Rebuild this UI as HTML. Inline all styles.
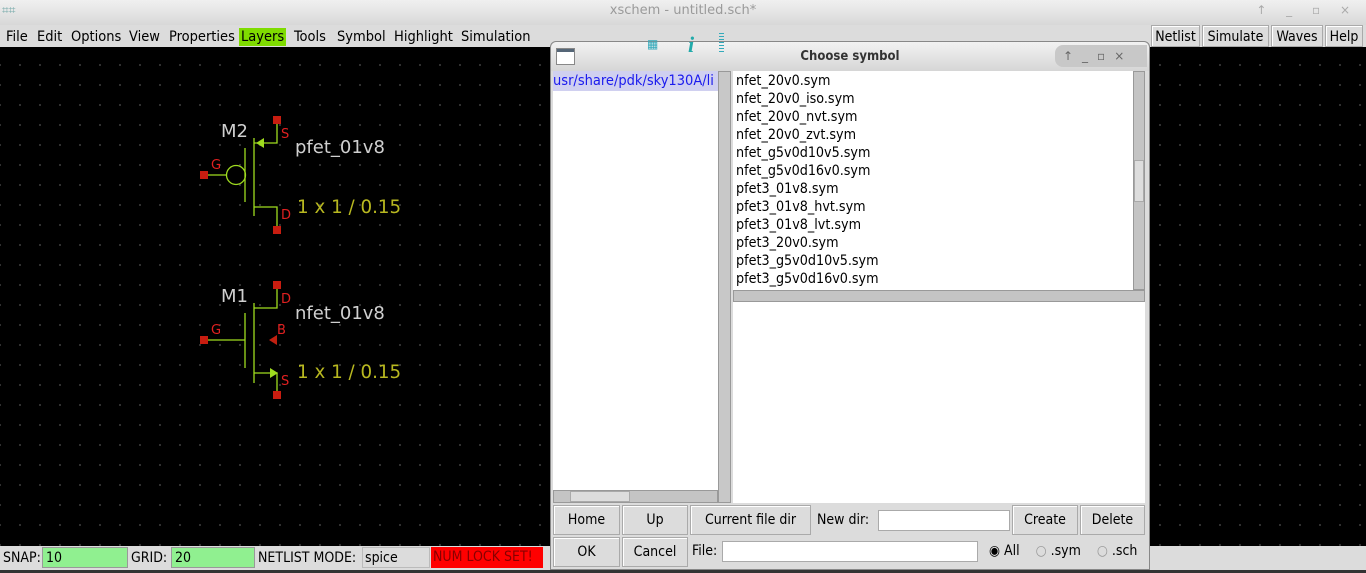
<!DOCTYPE html>
<html><head><meta charset="utf-8"><style>
*{margin:0;padding:0;box-sizing:border-box}
html,body{width:1366px;height:573px;overflow:hidden}
body{background:#000;font-family:"DejaVu Sans","Liberation Sans",sans-serif;font-size:13px;color:#000;position:relative}
.a{position:absolute;white-space:nowrap}
.c{font-family:"DejaVu Sans Condensed","DejaVu Sans","Liberation Sans",sans-serif}
.title{left:0;top:0;width:1366px;height:25px;background:linear-gradient(#f0f0f0,#d8d8d8);color:#9a9a9a;text-align:center;line-height:22px;font-size:13px}
.menu{left:0;top:25px;width:1366px;height:22px;background:#dcdcdc}
.menu span{position:absolute;top:4px;font-size:14.5px}
.canvas{left:0;top:47px;width:1366px;height:499px;background:#000 radial-gradient(circle,#3a3a3a 0.8px,transparent 1.2px) 10px 8px/20px 20px}
.status{left:0;top:546px;width:1366px;height:24px;background:#dcdcdc;font-size:14px}
.btn{position:absolute;background:#dcdcdc;border:1px solid #aaa;box-shadow:inset 1px 1px #fff;text-align:center;font-size:14px;white-space:nowrap;font-family:"DejaVu Sans Condensed","DejaVu Sans",sans-serif}
.ent{position:absolute;background:#fff;border:1px solid #aaa}
.sb{position:absolute;background:#c4c4c4;border:1px solid #999}
.list div{height:18px;line-height:18px;font-size:14.2px}
</style></head><body>
<div class="a title">xschem - untitled.sch*</div>
<div class="a" style="left:2px;top:3px;width:20px;height:16px;color:#7aa;font-size:12px">⌗⌗</div>
<div class="a" style="right:8px;top:3px;color:#aaa;font-size:12px;letter-spacing:8px">↑ _ ▫ ×</div>
<div class="a menu c">
<span style="left:6px">File</span><span style="left:37px">Edit</span><span style="left:71px">Options</span><span style="left:129px">View</span><span style="left:169px">Properties</span>
<span style="left:239px;top:3px;background:#7fdc00;padding:1px 2px">Layers</span><span style="left:294px">Tools</span><span style="left:337px">Symbol</span><span style="left:394px">Highlight</span><span style="left:461px">Simulation</span>
</div>
<div class="a canvas"></div>
<div class="btn" style="left:1151px;top:25px;width:49px;height:22px;line-height:22px">Netlist</div>
<div class="btn" style="left:1202px;top:25px;width:67px;height:22px;line-height:22px">Simulate</div>
<div class="btn" style="left:1271px;top:25px;width:52px;height:22px;line-height:22px">Waves</div>
<div class="btn" style="left:1325px;top:25px;width:38px;height:22px;line-height:22px">Help</div>
<svg class="a" style="left:0;top:47px" width="550" height="499" viewBox="0 47 550 499">
<g stroke="#9fdc1f" stroke-width="1.3" fill="none">
<line x1="245" y1="148" x2="245" y2="202"/><line x1="254" y1="138" x2="254" y2="216"/>
<polyline points="254,143 277,143 277,121"/><polyline points="254,207 277,207 277,228"/>
<line x1="206" y1="175" x2="226" y2="175"/><circle cx="236" cy="175" r="9.5"/>
<line x1="245" y1="313" x2="245" y2="368"/><line x1="254" y1="303" x2="254" y2="383"/>
<polyline points="254,308 277,308 277,286"/><polyline points="254,373 277,373 277,393"/>
<line x1="206" y1="340" x2="245" y2="340"/>
</g>
<polygon points="256,143 264,138 264,148" fill="#9fdc1f"/>
<polygon points="278,373 270,368 270,378" fill="#9fdc1f"/>
<polygon points="269,340 277,335 277,345" fill="#c02010"/>
<g fill="#c81d10"><rect x="273" y="116" width="8" height="8"/><rect x="273" y="226" width="8" height="8"/><rect x="200" y="171" width="8" height="8"/>
<rect x="273" y="281" width="8" height="8"/><rect x="273" y="391" width="8" height="8"/><rect x="200" y="336" width="8" height="8"/></g>
<g fill="#e02020" font-size="13" font-family="DejaVu Sans"><text x="281" y="138">S</text><text x="211" y="169">G</text><text x="281" y="219">D</text>
<text x="281" y="303">D</text><text x="211" y="334">G</text><text x="277" y="334">B</text><text x="281" y="385">S</text></g>
<g fill="#d0d0d0" font-size="18" font-family="DejaVu Sans"><text x="221" y="137">M2</text><text x="295" y="153">pfet_01v8</text><text x="221" y="302">M1</text><text x="295" y="319">nfet_01v8</text></g>
<g fill="#b8b820" font-size="18.3" font-family="DejaVu Sans"><text x="297" y="213">1 x 1 / 0.15</text><text x="297" y="378">1 x 1 / 0.15</text></g>
</svg>
<div class="a status c">
<span class="a" style="left:3px;top:4px">SNAP:</span><div class="a" style="left:42px;top:1px;width:86px;height:21px;background:#90f090;border:1px solid #999;padding-left:3px;line-height:21px">10</div>
<span class="a" style="left:131px;top:4px">GRID:</span><div class="a" style="left:171px;top:1px;width:84px;height:21px;background:#90f090;border:1px solid #999;padding-left:3px;line-height:21px">20</div>
<span class="a" style="left:258px;top:4px">NETLIST MODE:</span><div class="a" style="left:362px;top:1px;width:68px;height:21px;background:#dcdcdc;border:1px solid #bbb;padding-left:2px;line-height:21px">spice</div>
<div class="a" style="left:431px;top:1px;width:112px;height:21px;background:#f00;color:#800;padding-left:2px;line-height:21px;overflow:hidden">NUM LOCK SET!</div>
</div>
<div class="a" style="left:0;top:570px;width:1366px;height:3px;background:#333"></div>
<!-- dialog -->
<div class="a" style="left:550px;top:41px;width:600px;height:529px;background:#dcdcdc;border:1px solid #888;border-radius:6px 6px 0 0"></div>
<div class="a c" style="left:551px;top:42px;width:598px;height:29px;background:linear-gradient(#f2f2f2,#d6d6d6);border-radius:6px 6px 0 0;text-align:center;line-height:30px;font-weight:bold;font-size:13px;color:#333">Choose symbol</div>
<div class="a" style="left:556px;top:48px;width:19px;height:17px;border:1px solid #888;background:linear-gradient(#567 3px,#fff 3px)"></div>
<div class="a" style="left:1055px;top:45px;width:92px;height:22px;background:#c8c8c8;border-radius:8px 0 0 8px;color:#666;font-size:12px;line-height:22px;letter-spacing:9px;padding-left:8px">↑_▫×</div>
<div class="a" style="left:647px;top:37px;color:#3ab;font-size:12px">▦</div>
<div class="a" style="left:688px;top:32px;color:#2aa;font-size:22px;font-style:italic;font-weight:bold;font-family:'Liberation Serif',serif">i</div>
<div class="a" style="left:719px;top:33px;width:5px;height:20px;background:repeating-linear-gradient(#3ab 0 1px,transparent 1px 3px)"></div>
<div class="ent c" style="left:553px;top:71px;width:165px;height:419px;border:none"><div style="color:#1a1aee;background:#d0d0f0;font-size:14.5px;line-height:20px;white-space:nowrap;overflow:hidden">usr/share/pdk/sky130A/li</div></div>
<div class="sb" style="left:718px;top:71px;width:13px;height:432px;background:#c8c8c8"></div>
<div class="sb" style="left:553px;top:490px;width:165px;height:13px"><div class="a" style="left:16px;top:0;width:60px;height:11px;background:#ddd;border:1px solid #aaa"></div></div>
<div class="ent list c" style="left:733px;top:71px;width:400px;height:219px;padding-left:3px;padding-top:1px;border:none">
<div>nfet_20v0.sym</div><div>nfet_20v0_iso.sym</div><div>nfet_20v0_nvt.sym</div><div>nfet_20v0_zvt.sym</div><div>nfet_g5v0d10v5.sym</div><div>nfet_g5v0d16v0.sym</div><div>pfet3_01v8.sym</div><div>pfet3_01v8_hvt.sym</div><div>pfet3_01v8_lvt.sym</div><div>pfet3_20v0.sym</div><div>pfet3_g5v0d10v5.sym</div><div>pfet3_g5v0d16v0.sym</div></div>
<div class="sb" style="left:1133px;top:71px;width:12px;height:219px"><div class="a" style="left:0;top:88px;width:10px;height:42px;background:#ddd;border:1px solid #aaa"></div></div>
<div class="sb" style="left:733px;top:290px;width:412px;height:12px"></div>
<div class="ent" style="left:733px;top:302px;width:412px;height:201px;border:none"></div>
<div class="btn" style="left:553px;top:505px;width:67px;height:30px;line-height:29px">Home</div>
<div class="btn" style="left:622px;top:505px;width:66px;height:30px;line-height:29px">Up</div>
<div class="btn" style="left:690px;top:505px;width:121px;height:30px;line-height:29px">Current file dir</div>
<span class="a c" style="left:817px;top:512px;font-size:14px">New dir:</span>
<div class="ent" style="left:878px;top:510px;width:132px;height:21px"></div>
<div class="btn" style="left:1012px;top:505px;width:66px;height:30px;line-height:29px">Create</div>
<div class="btn" style="left:1080px;top:505px;width:65px;height:30px;line-height:29px">Delete</div>
<div class="btn" style="left:553px;top:537px;width:67px;height:30px;line-height:29px">OK</div>
<div class="btn" style="left:622px;top:537px;width:66px;height:30px;line-height:29px">Cancel</div>
<span class="a c" style="left:692px;top:543px;font-size:14px">File:</span>
<div class="ent" style="left:722px;top:541px;width:256px;height:21px"></div>
<span class="a c" style="left:989px;top:543px;font-size:14px">◉ All &nbsp;&nbsp;&nbsp;<span style="color:#999">○</span> .sym &nbsp;&nbsp;&nbsp;<span style="color:#999">○</span> .sch</span>
</body></html>
